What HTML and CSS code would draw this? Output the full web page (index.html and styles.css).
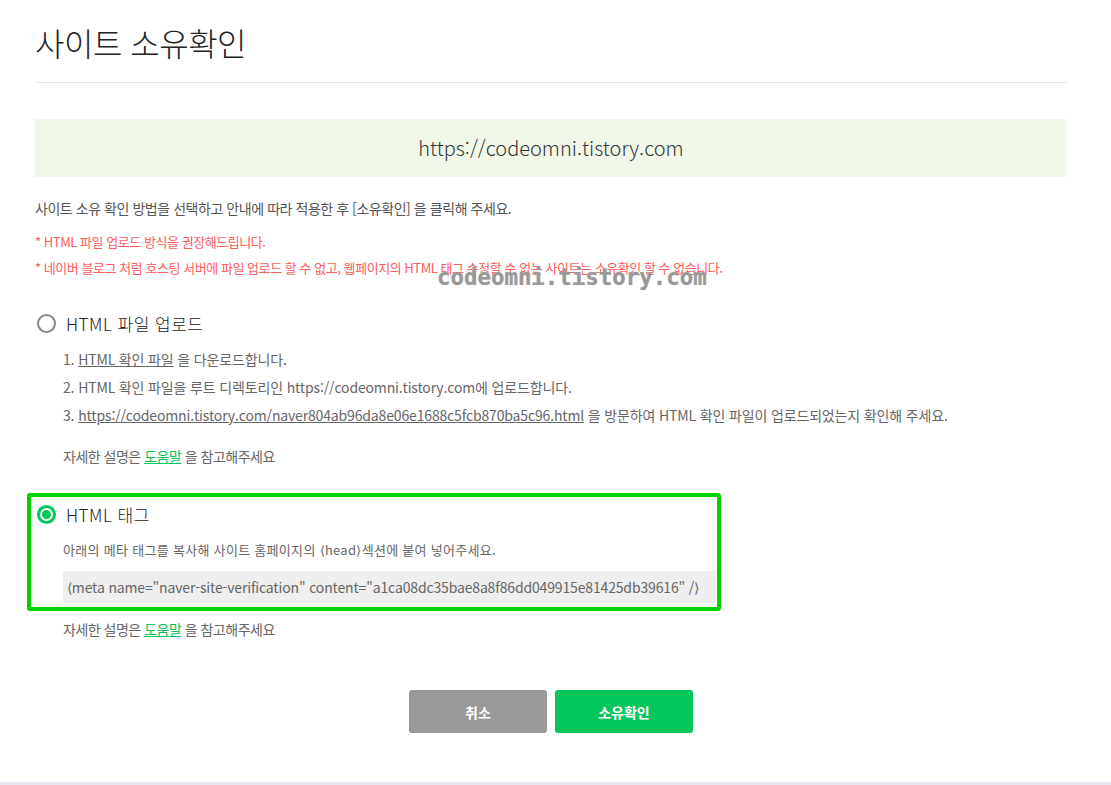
FILE: index.html
```html
<!DOCTYPE html>
<html lang="ko">
<head>
    <meta charset="UTF-8">
    <meta name="viewport" content="width=device-width, initial-scale=1.0">
    <title>사이트 소유확인</title>
    <link rel="stylesheet" href="styles.css">
</head>
<body>
    <div class="container">
        <header class="page-header">
            <h1>사이트 소유확인</h1>
        </header>

        <div class="site-url">https://codeomni.tistory.com</div>

        <p class="desc">사이트 소유 확인 방법을 선택하고 안내에 따라 적용한 후 [소유확인] 을 클릭해 주세요.</p>
        <ul class="notes">
            <li>* HTML 파일 업로드 방식을 권장해드립니다.</li>
            <li>* 네이버 블로그 처럼 호스팅 서버에 파일 업로드 할 수 없고, 웹페이지의 HTML 태그 수정할 수 없는 사이트는 소유확인 할 수 없습니다.</li>
        </ul>

        <div class="option option-file">
            <label class="option-title">
                <span class="radio"></span>
                HTML 파일 업로드
            </label>
            <ol class="steps">
                <li>1. <a href="#" class="plain-link">HTML 확인 파일</a> 을 다운로드합니다.</li>
                <li>2. HTML 확인 파일을 루트 디렉토리인 https://codeomni.tistory.com에 업로드합니다.</li>
                <li>3. <a href="#" class="plain-link">https://codeomni.tistory.com/naver804ab96da8e06e1688c5fcb870ba5c96.html</a> 을 방문하여 HTML 확인 파일이 업로드되었는지 확인해 주세요.</li>
            </ol>
            <p class="help">자세한 설명은 <a href="#" class="help-link">도움말</a> 을 참고해주세요</p>
        </div>

        <div class="option option-tag selected">
            <label class="option-title">
                <span class="radio checked"></span>
                HTML 태그
            </label>
            <p class="tag-desc">아래의 메타 태그를 복사해 사이트 홈페이지의 ⟨head⟩섹션에 붙여 넣어주세요.</p>
            <div class="code-box">⟨meta name="naver-site-verification" content="a1ca08dc35bae8a8f86dd049915e81425db39616" /⟩</div>
        </div>
        <p class="help help-tag">자세한 설명은 <a href="#" class="help-link">도움말</a> 을 참고해주세요</p>

        <div class="buttons">
            <button class="btn btn-cancel">취소</button>
            <button class="btn btn-confirm">소유확인</button>
        </div>
    </div>

    <div class="bottom-line"></div>

    <div class="watermark">codeomni.tistory.com</div>
</body>
</html>
```

FILE: styles.css
```css
:root {
    --green: #03c75a;
    --text-color: #333;
    --sub-text: #666;
    --line: #e5e5e5;
}

* {
    margin: 0;
    padding: 0;
    box-sizing: border-box;
}

body {
    font-family: "Noto Sans CJK KR", "Noto Sans", sans-serif;
    color: var(--text-color);
    background: #fff;
    position: relative;
    min-height: 785px;
}

.container {
    width: 1032px;
    margin-left: 35px;
}

.page-header {
    padding-top: 20px;
    height: 83px;
    border-bottom: 1px solid var(--line);
}

.page-header h1 {
    font-size: 32px;
    font-weight: 300;
    line-height: 44px;
    color: #222;
    letter-spacing: -0.5px;
}

.site-url {
    margin-top: 36px;
    height: 58px;
    line-height: 58px;
    background-color: #f1f7e9;
    text-align: center;
    font-size: 20px;
    font-weight: 300;
    color: #333;
}

.desc {
    margin-top: 21px;
    font-size: 14px;
    line-height: 20px;
    color: #555;
    letter-spacing: -0.45px;
}

.notes {
    list-style: none;
    margin-top: 11px;
}

.notes li {
    font-size: 13px;
    line-height: 26px;
    color: #ff5b5b;
    letter-spacing: -0.45px;
}

.option-title {
    display: flex;
    align-items: center;
    gap: 10px;
    height: 24px;
    font-size: 17px;
    font-weight: 300;
    color: #222;
    letter-spacing: 0.5px;
    cursor: pointer;
}

.radio {
    width: 19px;
    height: 19px;
    border: 2px solid #888;
    border-radius: 50%;
    display: flex;
    align-items: center;
    justify-content: center;
    flex-shrink: 0;
}

.radio.checked {
    border: 3px solid var(--green);
}

.radio.checked::after {
    content: "";
    width: 9px;
    height: 9px;
    border-radius: 50%;
    background: var(--green);
}

.option-file {
    margin-top: 30px;
    padding-left: 2px;
}

.steps {
    list-style: none;
    margin-top: 10px;
    margin-left: 26px;
}

.steps li {
    font-size: 14px;
    line-height: 28px;
    color: var(--sub-text);
    letter-spacing: -0.15px;
}

.plain-link {
    color: var(--sub-text);
    text-decoration: underline;
}

.help {
    margin-top: 17px;
    margin-left: 26px;
    font-size: 14px;
    line-height: 20px;
    color: var(--sub-text);
    letter-spacing: -0.5px;
}

.help-link {
    color: var(--green);
    text-decoration: underline;
}

.option-tag {
    margin-top: 27px;
    margin-left: -8px;
    width: 694px;
    padding: 5px 1px 4px 6px;
    border: 4px solid #00d200;
    border-radius: 3px;
}

.tag-desc {
    margin-top: 14px;
    margin-left: 26px;
    font-size: 13px;
    line-height: 20px;
    color: var(--sub-text);
    letter-spacing: 0.3px;
}

.code-box {
    margin-top: 11px;
    margin-left: 26px;
    height: 32px;
    line-height: 32px;
    padding-left: 4px;
    background: #eee;
    font-size: 14px;
    color: var(--sub-text);
    letter-spacing: -0.15px;
    white-space: nowrap;
    overflow: hidden;
}

.help-tag {
    margin-top: 8px;
    margin-left: 28px;
}

.buttons {
    margin-top: 51px;
    display: flex;
    justify-content: center;
    gap: 8px;
}

.btn {
    width: 138px;
    height: 43px;
    border: none;
    border-radius: 3px;
    color: #fff;
    font-family: inherit;
    font-size: 14px;
    font-weight: 700;
    cursor: pointer;
}

.btn-cancel {
    background: #999;
}

.btn-confirm {
    background: var(--green);
}

.bottom-line {
    position: absolute;
    left: 0;
    right: 0;
    bottom: 0;
    height: 3px;
    background: #e6e6ee;
}

.watermark {
    position: absolute;
    left: 437px;
    top: 264px;
    font-family: "DejaVu Sans Mono", monospace;
    font-weight: 700;
    font-size: 22.4px;
    line-height: 26px;
    color: #999;
    text-shadow: 0 0 1px #bbb;
    pointer-events: none;
}
```
